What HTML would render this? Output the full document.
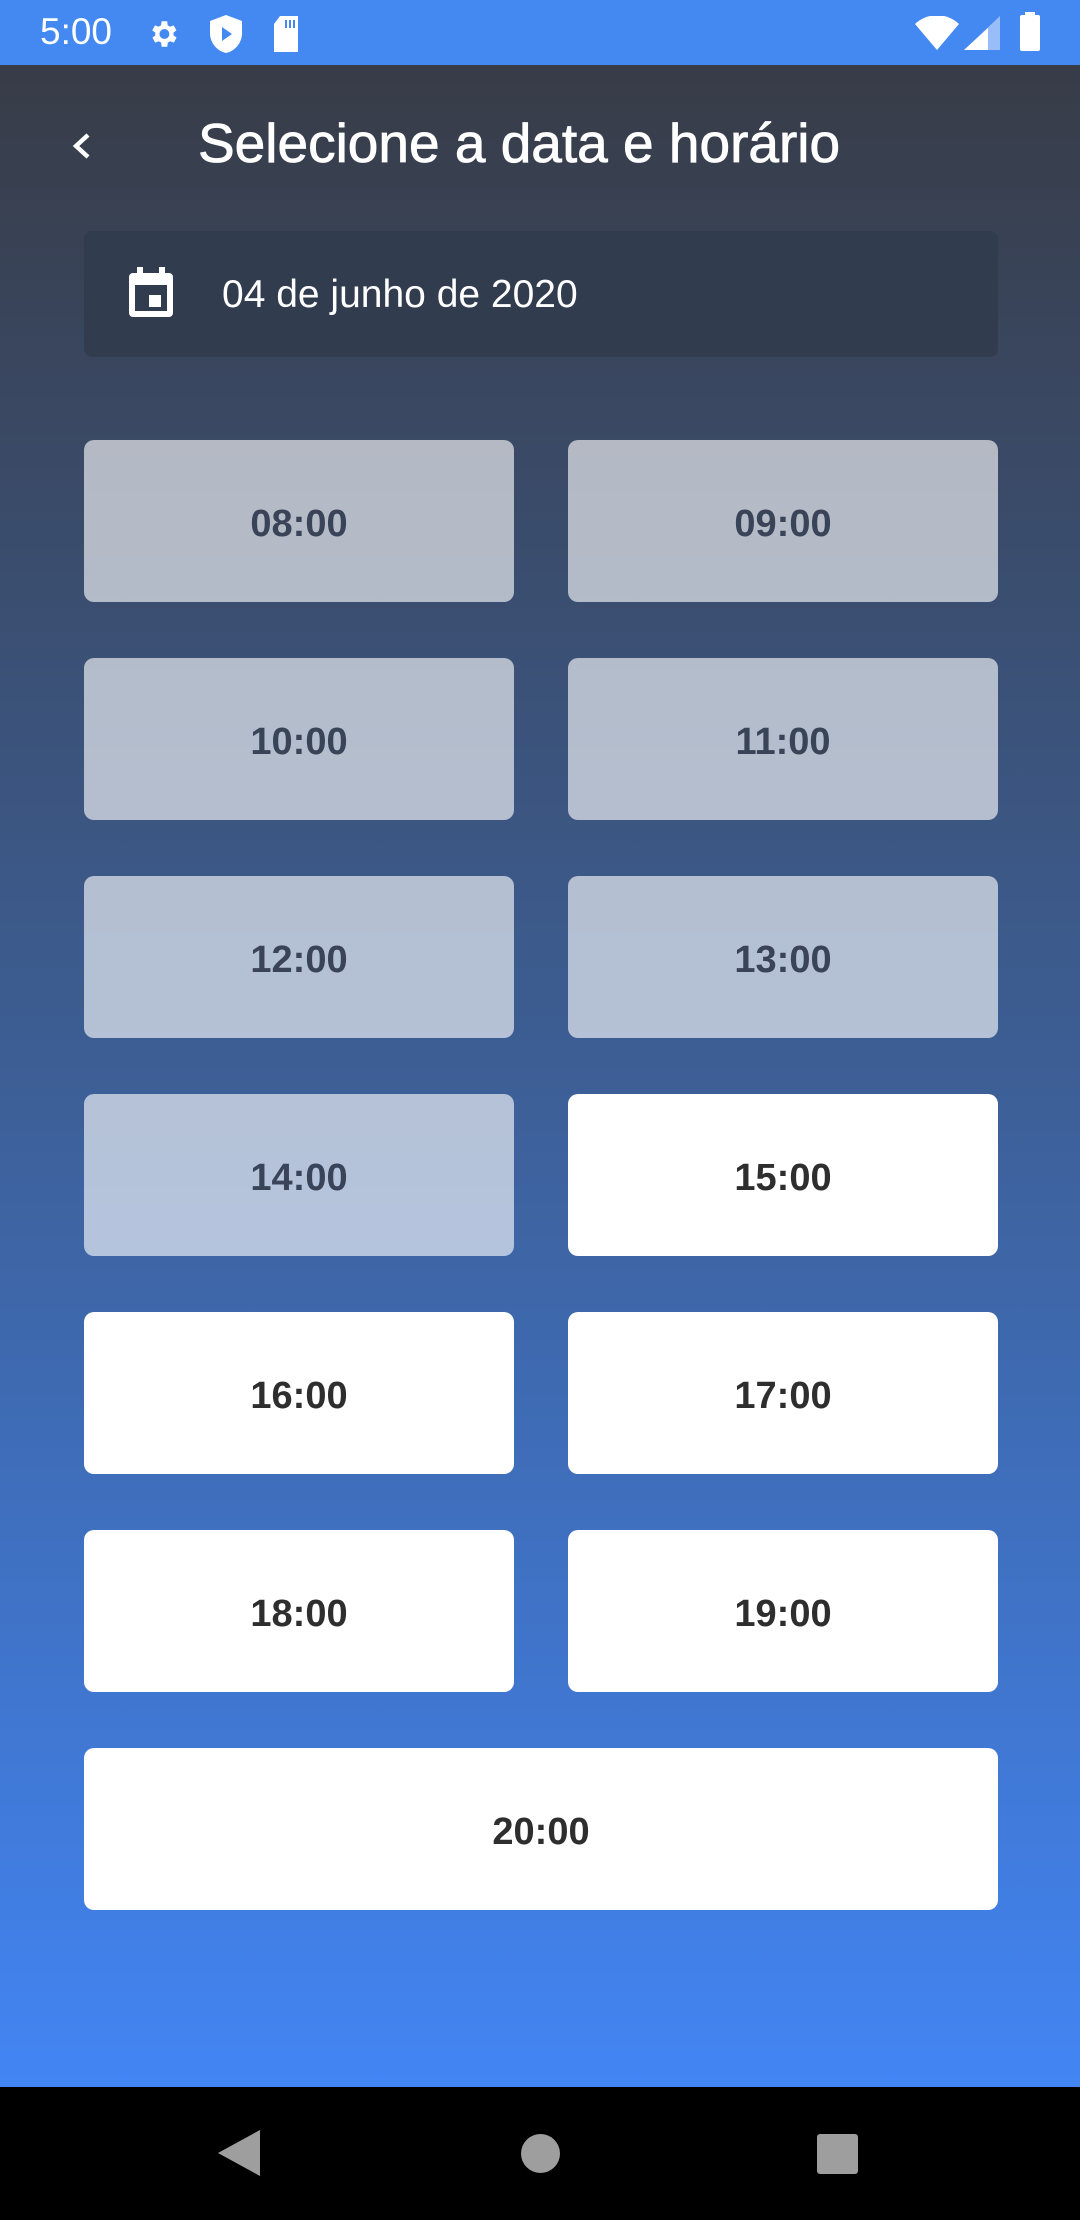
<!DOCTYPE html>
<html><head><meta charset="utf-8"><style>
*{margin:0;padding:0;box-sizing:border-box}
body{width:1080px;height:2220px;overflow:hidden;font-family:"Liberation Sans",sans-serif;position:relative;background:#000}
.sb{position:absolute;left:0;top:0;width:1080px;height:65px;background:#4488f2;color:#fff}
.main{position:absolute;left:0;top:65px;width:1080px;height:2022px;background:linear-gradient(#383c47,#3d6099 52%,#4285f4)}
.nav{position:absolute;left:0;top:2087px;width:1080px;height:133px;background:#000}
.btn{position:absolute;width:430px;height:162px;border-radius:10px;background:#fff;color:#2e2e2e;font-weight:bold;font-size:38px;display:flex;align-items:center;justify-content:center;padding-top:6px}
.g{background:rgba(255,255,255,0.62);color:#3a4458}
</style></head><body>
<div class="sb">
<div style="position:absolute;left:40px;top:11px;font-size:37px">5:00</div>
<svg style="position:absolute;left:146px;top:16px" width="34" height="36" viewBox="0 0 24 24"><path fill="#fff" d="M19.4 13a7.5 7.5 0 0 0 0-2l2.1-1.6-2-3.5-2.5 1a7 7 0 0 0-1.7-1L15 3h-4l-.4 2.9a7 7 0 0 0-1.7 1l-2.5-1-2 3.5L6.6 11a7.5 7.5 0 0 0 0 2l-2.1 1.6 2 3.5 2.5-1a7 7 0 0 0 1.700 1L11 21h4l.4-2.9a7 7 0 0 0 1.7-1l2.5 1 2-3.5zM13 15.5a3.5 3.5 0 1 1 0-7 3.5 3.5 0 0 1 0 7z"/></svg>
<svg style="position:absolute;left:210px;top:15px" width="32" height="38" viewBox="0 0 16 19"><path fill="#fff" d="M8 0L0 3v6c0 5 3.5 9 8 10 4.5-1 8-5 8-10V3z"/><path fill="#4488f2" d="M6 6v7l5-3.5z"/></svg>
<svg style="position:absolute;left:272px;top:16px" width="28" height="36" viewBox="0 0 14 18"><path fill="#fff" d="M4 0h9v18H1V4z"/><path stroke="#4488f2" stroke-width="1" d="M7 2v4M9 2v4M11 2v4"/></svg>
<svg style="position:absolute;left:915px;top:16px" width="44" height="34" viewBox="0 0 22 17"><path fill="#fff" d="M0 4a16 16 0 0 1 22 0L11 17z"/></svg>
<svg style="position:absolute;left:964px;top:16px" width="36" height="34" viewBox="0 0 18 17"><path fill="rgba(255,255,255,0.45)" d="M18 0v17H0z"/><path fill="#fff" d="M12 6v11H0z"/></svg>
<div style="position:absolute;left:1020px;top:15px;width:20px;height:36px;background:#fff;border-radius:2px"></div>
<div style="position:absolute;left:1025px;top:12px;width:10px;height:4px;background:#fff"></div>
</div>
<div class="main">
<svg style="position:absolute;left:70px;top:66px" width="24" height="30" viewBox="0 0 12 15"><path d="M9 2L3 7.5 9 13" stroke="#fff" stroke-width="2.2" fill="none"/></svg>
<div style="position:absolute;left:198px;top:46px;font-size:55px;color:#fff;-webkit-text-stroke:0.8px #fff">Selecione a data e horário</div>
<div style="position:absolute;left:84px;top:166px;width:914px;height:126px;background:#323c4f;border-radius:8px">
<svg style="position:absolute;left:45px;top:36px" width="44" height="50" viewBox="0 0 22 25"><path fill="#fff" d="M4 0h3v3h8V0h3v3h2a2 2 0 0 1 2 2v18a2 2 0 0 1-2 2H2a2 2 0 0 1-2-2V5a2 2 0 0 1 2-2h2zM3 9v13h16V9z"/><rect fill="#fff" x="10" y="14" width="6" height="6"/></svg>
<div style="position:absolute;left:138px;top:42px;font-size:39px;color:#fff">04 de junho de 2020</div>
</div>
</div>
<div class="btn g" style="left:84px;top:440px">08:00</div>
<div class="btn g" style="left:568px;top:440px">09:00</div>
<div class="btn g" style="left:84px;top:658px">10:00</div>
<div class="btn g" style="left:568px;top:658px">11:00</div>
<div class="btn g" style="left:84px;top:876px">12:00</div>
<div class="btn g" style="left:568px;top:876px">13:00</div>
<div class="btn g" style="left:84px;top:1094px">14:00</div>
<div class="btn" style="left:568px;top:1094px">15:00</div>
<div class="btn" style="left:84px;top:1312px">16:00</div>
<div class="btn" style="left:568px;top:1312px">17:00</div>
<div class="btn" style="left:84px;top:1530px">18:00</div>
<div class="btn" style="left:568px;top:1530px">19:00</div>
<div class="btn" style="left:84px;top:1748px;width:914px">20:00</div>
<div class="nav">
<svg style="position:absolute;left:218px;top:43px" width="42" height="46" viewBox="0 0 21 23"><path fill="#9e9e9e" d="M21 0v23L0 11.5z"/></svg>
<div style="position:absolute;left:521px;top:47px;width:39px;height:39px;border-radius:50%;background:#9e9e9e"></div>
<div style="position:absolute;left:817px;top:47px;width:41px;height:40px;border-radius:3px;background:#9e9e9e"></div>
</div>
</body></html>
